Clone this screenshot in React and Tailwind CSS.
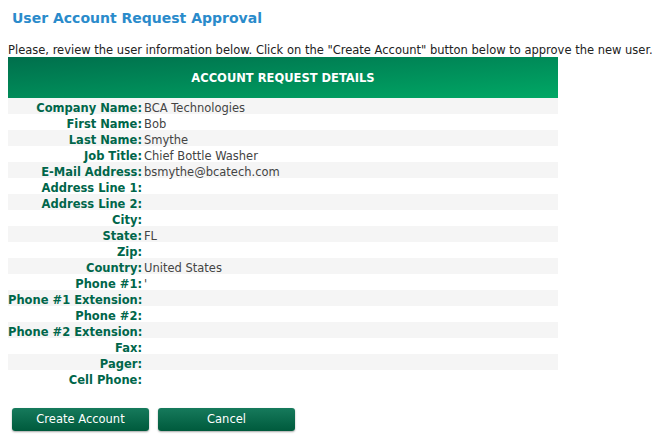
import React from 'react';

const rows = [
  ['Company Name:', 'BCA Technologies'],
  ['First Name:', 'Bob'],
  ['Last Name:', 'Smythe'],
  ['Job Title:', 'Chief Bottle Washer'],
  ['E-Mail Address:', 'bsmythe@bcatech.com'],
  ['Address Line 1:', ''],
  ['Address Line 2:', ''],
  ['City:', ''],
  ['State:', 'FL'],
  ['Zip:', ''],
  ['Country:', 'United States'],
  ['Phone #1:', "'"],
  ['Phone #1 Extension:', ''],
  ['Phone #2:', ''],
  ['Phone #2 Extension:', ''],
  ['Fax:', ''],
  ['Pager:', ''],
  ['Cell Phone:', ''],
];

const Btn = ({ children }) => (
  <button
    type="button"
    className="w-[137px] h-[23px] rounded-[3px] bg-gradient-to-b from-[#167a5c] to-[#005a3c] text-white text-[11.5px] shadow-[0_1px_2px_rgba(0,0,0,0.35)]"
  >
    {children}
  </button>
);

export default function App() {
  return (
    <div className="bg-white min-h-[446px] text-[11.5px] text-[#222] font-['DejaVu_Sans','Verdana',sans-serif]">
      <h1 className="pl-3 pt-[9px] text-[14px] font-bold text-[#2a8bcb] leading-[18px]">User Account Request Approval</h1>
      <p className="pl-2 mt-[16px] leading-[14px]">
        Please, review the user information below. Click on the "Create Account" button below to approve the new user.
      </p>
      <div className="ml-2 w-[550px]">
        <div className="h-[41px] pt-[3px] flex items-center justify-center bg-gradient-to-br from-[#006f4c] to-[#00a865] text-white font-bold">
          ACCOUNT REQUEST DETAILS
        </div>
        {rows.map(([label, value], i) => (
          <div key={label} className={`flex h-[16px] items-start leading-[21px] ${i % 2 === 0 ? 'bg-[#f5f5f5]' : 'bg-white'}`}>
            <div className="w-[134px] shrink-0 whitespace-nowrap text-right font-bold text-[#00664a]">{label}</div>
            <div className="pl-[2px] whitespace-nowrap text-[#444]">{value}</div>
          </div>
        ))}
      </div>
      <div className="flex gap-[9px] pl-3 mt-[22px]">
        <Btn>Create Account</Btn>
        <Btn>Cancel</Btn>
      </div>
    </div>
  );
}
